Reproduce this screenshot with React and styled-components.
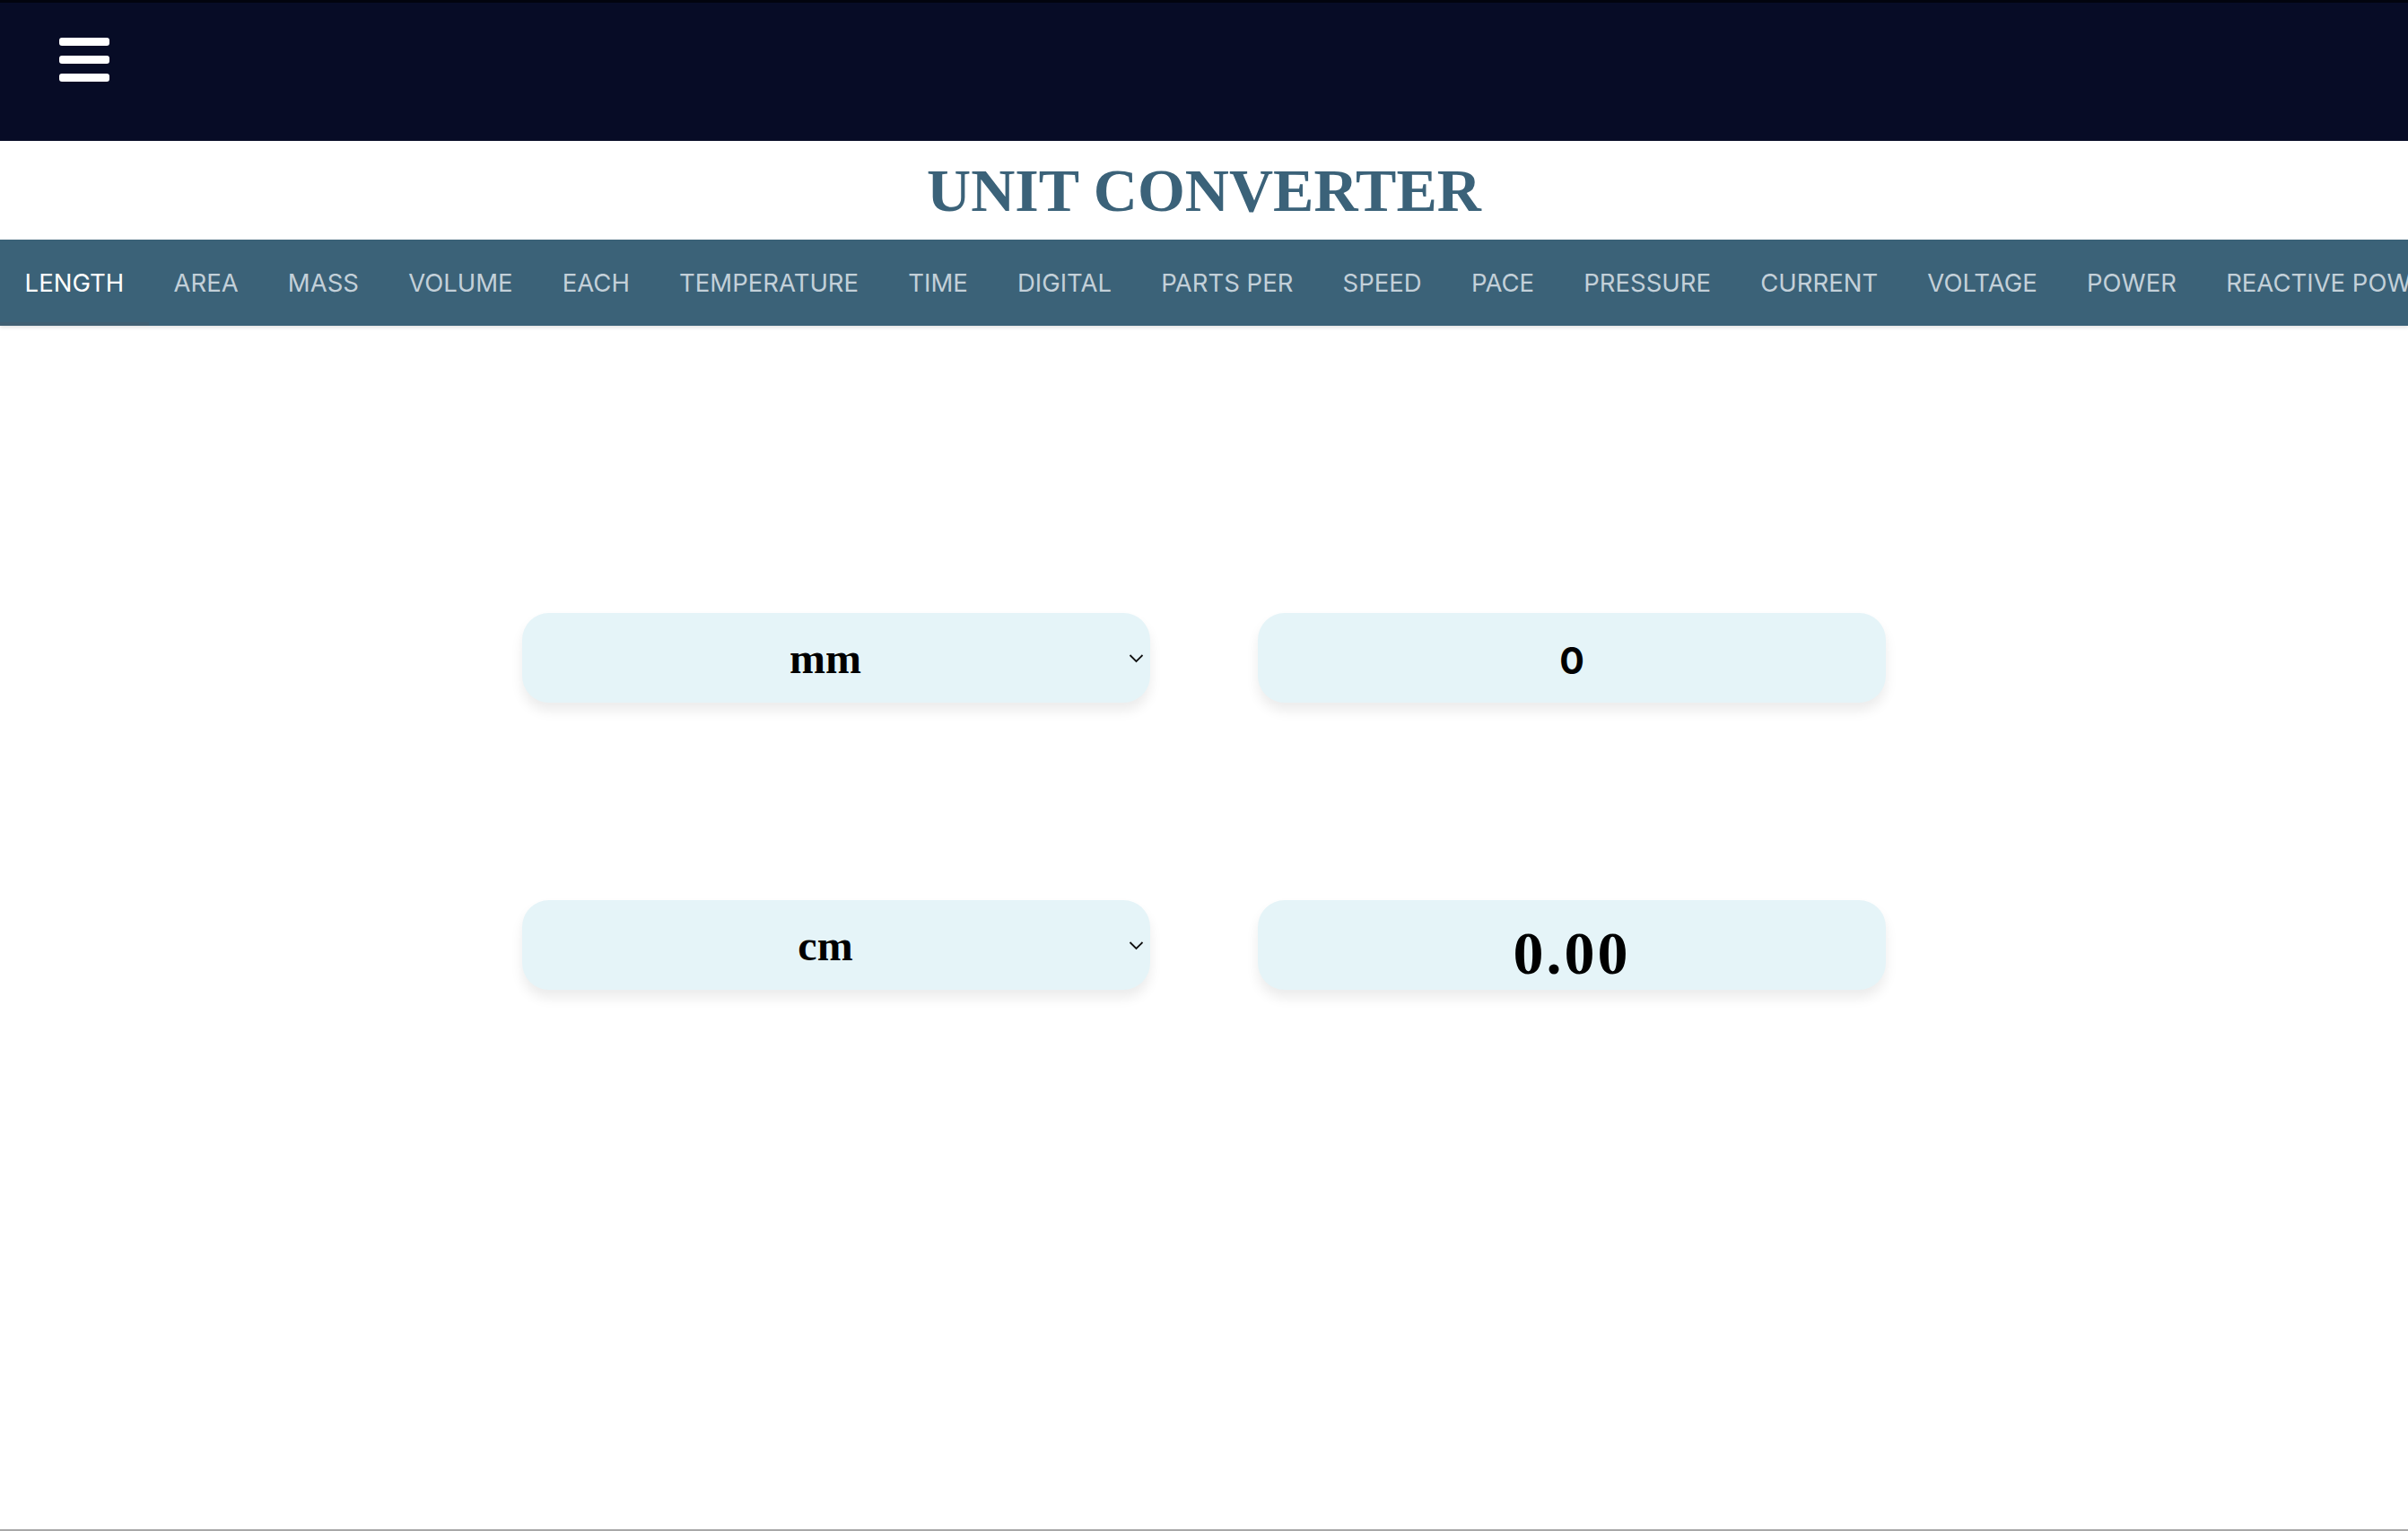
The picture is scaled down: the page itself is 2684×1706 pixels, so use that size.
import React, { useState } from 'react';
import styled, { createGlobalStyle } from 'styled-components';

const GlobalStyle = createGlobalStyle`
  * { box-sizing: border-box; }
  html, body { margin: 0; padding: 0; background: #ffffff; }
  body { font-family: "Liberation Serif", serif; }
`;

const Page = styled.div`
  min-height: 100vh;
  display: flex;
  flex-direction: column;
  border-bottom: 2px solid #a8a8a8;
`;

const TopBar = styled.header`
  height: 157px;
  background: #070c26;
  border-top: 3px solid #02040e;
  padding: 39px 0 0 66px;
`;

const MenuButton = styled.button`
  width: 56px;
  height: 49px;
  padding: 0;
  border: none;
  background: transparent;
  display: flex;
  flex-direction: column;
  justify-content: space-between;
  cursor: pointer;
`;

const MenuLine = styled.span`
  display: block;
  height: 9px;
  width: 100%;
  border-radius: 3px;
  background: #ffffff;
`;

const Title = styled.h1`
  margin: 0;
  height: 110px;
  display: flex;
  align-items: center;
  justify-content: center;
  font-family: "Liberation Serif", serif;
  font-weight: 700;
  font-size: 68px;
  color: #3b6279;
`;

const TabBar = styled.nav`
  height: 96px;
  background: #3b6278;
  display: flex;
  overflow: hidden;
  white-space: nowrap;
  box-shadow: 0 2px 4px rgba(0, 0, 0, 0.12);
`;

const Tab = styled.button`
  position: relative;
  flex: none;
  height: 100%;
  padding: 0 27.6px;
  border: none;
  background: transparent;
  font-family: Inter, "Liberation Sans", sans-serif;
  font-size: 27.5px;
  font-weight: 400;
  color: ${({ $active }) => ($active ? '#ffffff' : '#c3d0d9')};
  cursor: pointer;

  &::after {
    content: '';
    position: absolute;
    left: 0;
    right: 0;
    bottom: 0;
    height: 4px;
    background: ${({ $active }) => ($active ? '#405f72' : 'transparent')};
  }
`;

const Main = styled.main`
  flex: 1;
  display: flex;
  flex-direction: column;
  align-items: center;
  gap: 220px;
  padding-top: 320px;
`;

const Row = styled.div`
  display: grid;
  grid-template-columns: 700px 700px;
  gap: 120px;
`;

const Field = styled.div`
  height: 100px;
  border-radius: 30px;
  background: #e5f4f8;
  box-shadow: 0 9px 14px rgba(0, 0, 0, 0.08);
  display: flex;
  align-items: center;
`;

const SelectText = styled.span`
  flex: 1;
  text-align: center;
  font-family: "Liberation Serif", serif;
  font-weight: 700;
  font-size: 48px;
  color: #000000;
`;

const Chevron = styled.svg`
  flex: none;
  width: 17px;
  height: 11px;
  margin: 0 7px 0 0;
`;

const Value = styled.span`
  flex: 1;
  text-align: center;
  color: #000000;
  font-weight: 700;
  font-family: ${({ $serif }) => ($serif ? '"Liberation Serif", serif' : 'Inter, "Liberation Sans", sans-serif')};
  font-size: ${({ $size }) => $size}px;
  letter-spacing: ${({ $spacing }) => $spacing || 0}px;
  padding-top: ${({ $shift }) => $shift || 0}px;
`;

const tabs = [
  'LENGTH', 'AREA', 'MASS', 'VOLUME', 'EACH', 'TEMPERATURE', 'TIME', 'DIGITAL',
  'PARTS PER', 'SPEED', 'PACE', 'PRESSURE', 'CURRENT', 'VOLTAGE', 'POWER',
  'REACTIVE POWER',
];

const UnitSelect = ({ unit }) => (
  <Field>
    <SelectText>{unit}</SelectText>
    <Chevron viewBox="0 0 17 11">
      <path d="M1.5 2 L8.5 9 L15.5 2" fill="none" stroke="#111" strokeWidth="1.8" />
    </Chevron>
  </Field>
);

const App = () => {
  const [active, setActive] = useState('LENGTH');
  return (
    <Page>
      <GlobalStyle />
      <TopBar>
        <MenuButton aria-label="menu">
          <MenuLine />
          <MenuLine />
          <MenuLine />
        </MenuButton>
      </TopBar>
      <Title>UNIT CONVERTER</Title>
      <TabBar>
        {tabs.map((t) => (
          <Tab key={t} $active={t === active} onClick={() => setActive(t)}>{t}</Tab>
        ))}
      </TabBar>
      <Main>
        <Row>
          <UnitSelect unit="mm" />
          <Field>
            <Value $size={41} $shift={6}>0</Value>
          </Field>
        </Row>
        <Row>
          <UnitSelect unit="cm" />
          <Field>
            <Value $serif $size={68} $spacing={3} $shift={18}>0.00</Value>
          </Field>
        </Row>
      </Main>
    </Page>
  );
};

export default App;
